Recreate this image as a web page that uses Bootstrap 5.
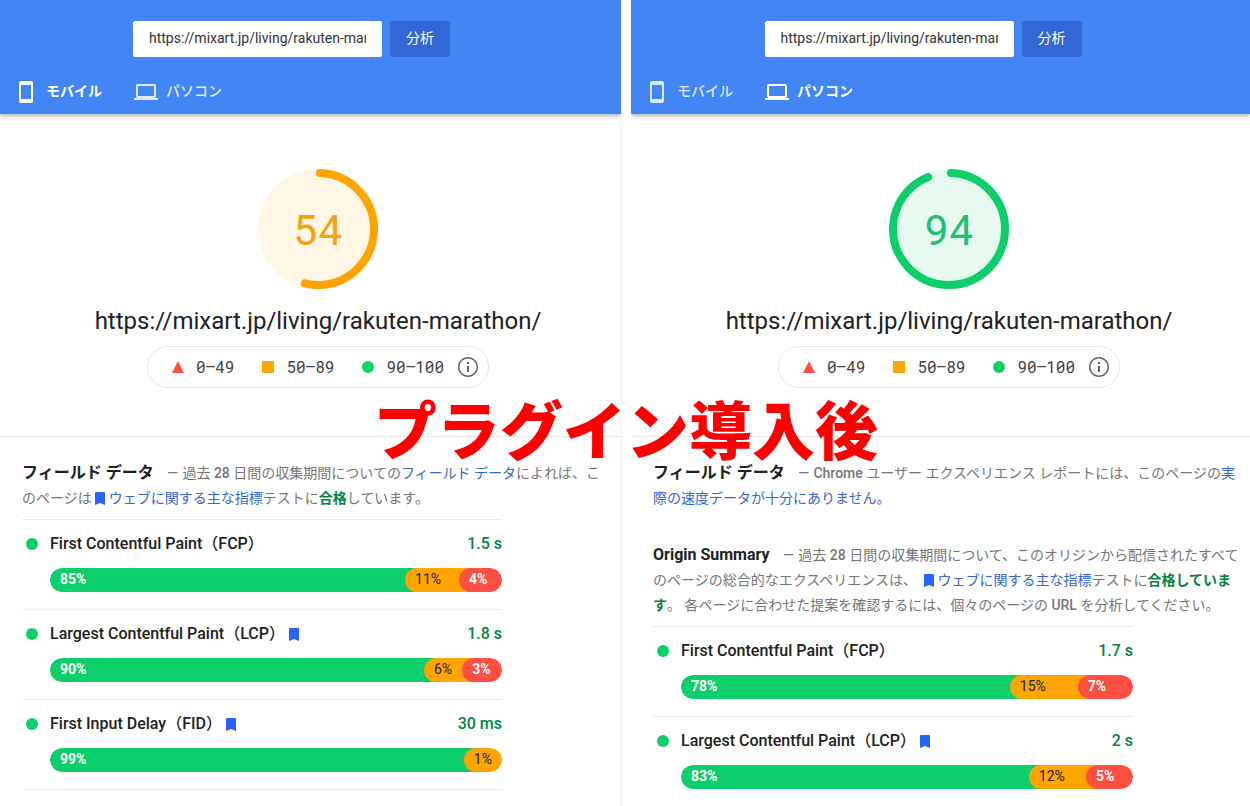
<!DOCTYPE html>
<html lang="ja">
<head>
<meta charset="utf-8">
<meta name="viewport" content="width=device-width, initial-scale=1">
<title>PageSpeed Insights</title>
<link href="https://cdn.jsdelivr.net/npm/bootstrap@5.3.0/dist/css/bootstrap.min.css" rel="stylesheet">
<style>
body { font-family: Roboto, "Noto Sans CJK JP", sans-serif; font-size: 14px; color: #212121; background: #fff; overflow-x: hidden; }
.compare { display: grid; grid-template-columns: 621fr 10px 619fr; }
.divider { border-left: 1px solid #f3f3f3; }
.report { min-width: 0; }
.topbar { background: #4285f4; height: 114px; padding-top: 21px; box-shadow: 0 2px 4px rgba(0,0,0,.3); clip-path: inset(0 0 -8px 0); }
.topbar form { padding-right: 38px; }
.desktop .topbar form { padding-right: 35px; }
.url-box { width: 249px; height: 36px; padding: 0 16px 2px; border: 0; border-radius: 2px; font-size: 14px; color: #333; }
.go { width: 60px; height: 36px; padding: 0 0 2px; border-radius: 2px; font-size: 14px; --bs-btn-bg: #3367d6; --bs-btn-color: #fff; --bs-btn-hover-bg: #2a56c6; --bs-btn-hover-color: #fff; --bs-btn-border-width: 0; }
.tabs { padding: 23px 0 0 18px; gap: 32px; }
.tabs a { color: #fff; opacity: .82; height: 24px; line-height: 20px; text-decoration: none; font-weight: 500; }
.tabs a.active { opacity: 1; font-weight: 700; }
.tabs a + a { gap: 8px; }
.tabs a:first-child { gap: 12px; }
.tabs span { padding-bottom: 2px; }
.hero { padding: 55px 0 48px 15px; border-bottom: 1px solid #e6e6e6; }
.desktop .hero { padding-left: 17px; }
.gauge { width: 120px; height: 120px; }
.gauge text { font-family: "Roboto Mono", Roboto, sans-serif; font-size: 42px; text-anchor: middle; }
.page-url { font-size: 24px; line-height: 32px; margin: 16px 0 9px; font-weight: 400; }
.scale { width: 342px; max-width: 100%; height: 42px; padding-left: 24px; border: 1px solid #e6e6e6; border-radius: 21px; font-family: "Roboto Mono", "Liberation Mono", monospace; font-size: 16px; color: #424242; }
.scale span + span { margin-left: 28px; }
.scale span + svg { margin-left: 12px; }
.field { padding: 24px 6px 0 22px; }
.mobile .field { padding-right: 12px; }
.summary { line-height: 25px; color: #757575; }
.summary + .metrics { margin-top: 8px; }
.summary + .summary { margin-top: 32px; }
.summary h2 { font-size: 16px; line-height: 24px; font-weight: 700; color: #212121; display: inline; margin: 0 10px 0 0; }
.summary a { color: #3367d6; text-decoration: none; }
.summary b { color: #018642; }
.summary span { font-weight: 500; }
.summary .dash { margin-right: 1px; }
.flag { width: 10px; height: 13px; fill: #2962ff; }
.summary .flag { margin: 0 4px 0 3px; vertical-align: -2px; }
.metrics { max-width: 480px; border-bottom: 1px solid #ebebeb; }
.metric { border-top: 1px solid #ebebeb; height: 90px; padding-top: 12px; font-size: 16px; }
.metric-head { height: 24px; font-weight: 500; line-height: 24px; }
.metric-head h3 { font-size: 16px; line-height: 24px; font-weight: 500; margin: 0; }
.metric-head .flag { margin-left: 4px; }
.dot { width: 12px; height: 12px; border-radius: 50%; background: #0cce6b; margin: 0 12px 0 4px; }
.value { color: #018642; }
.dist { height: 24px; margin: 12px 0 0 28px; border-radius: 12px; overflow: hidden; }
.seg { border-radius: 12px; padding-left: 10px; font-size: 14px; line-height: 23px; font-weight: 700; color: #fff; flex-shrink: 0; }
.seg + .seg { margin-left: -12px; }
.seg:last-child { flex: 1 0 0; }
.good { background: #0cce6b; }
.good.seg { border-radius: 12px 0 0 12px; }
.medium { background: #ffa400; color: #212121; font-weight: 400; }
.medium:not(:last-child) { border-radius: 12px 0 0 12px; }
.poor { background: #ff4e42; }
.caption { left: 0; right: 0; top: 382px; padding-left: 2px; font-family: "Noto Sans CJK JP", sans-serif; font-weight: 900; font-size: 63px; line-height: 90px; color: #f00; pointer-events: none; }
</style>
</head>
<body>
<svg class="d-none" aria-hidden="true">
  <symbol id="bookmark" viewBox="0 0 10 13"><path d="M1 0h8a1 1 0 0 1 1 1v12L5 11 0 13V1a1 1 0 0 1 1-1z"/></symbol>
  <symbol id="phone" viewBox="0 0 16 24"><path fill-rule="evenodd" d="M3 1h10a2 2 0 0 1 2 2v18a2 2 0 0 1-2 2H3a2 2 0 0 1-2-2V3a2 2 0 0 1 2-2zm0 4v14h10V5z"/></symbol>
  <symbol id="laptop" viewBox="0 0 24 24"><path fill-rule="evenodd" d="M4 4h16a2 2 0 0 1 2 2v10a2 2 0 0 1-2 2h4v2H0v-2h4a2 2 0 0 1-2-2V6a2 2 0 0 1 2-2zm0 2v10h16V6z"/></symbol>
  <symbol id="info" viewBox="0 0 24 24"><path d="M11 17h2v-6h-2v6zm1-15C6.480 2 2 6.480 2 12s4.480 10 10 10 10-4.480 10-10S17.520 2 12 2zm0 18.500c-4.700 0-8.500-3.800-8.500-8.500S7.300 3.500 12 3.500s8.500 3.800 8.500 8.500-3.800 8.500-8.500 8.500zM11 9h2V7h-2v2z"/></symbol>
</svg>
<main class="compare position-relative">
  <section class="report mobile">
    <header class="topbar">
      <form class="d-flex justify-content-center gap-2">
        <input class="url-box" type="text" aria-label="URL" value="https://mixart.jp/living/rakuten-marathon/">
        <button class="btn go" type="button">分析</button>
      </form>
      <nav class="tabs d-flex">
        <a class="active d-flex align-items-center" href="#"><svg width="16" height="24" fill="#fff"><use href="#phone"/></svg><span>モバイル</span></a>
        <a class="d-flex align-items-center" href="#"><svg width="24" height="24" fill="#fff"><use href="#laptop"/></svg><span>パソコン</span></a>
      </nav>
    </header>
    <div class="hero d-flex flex-column align-items-center">
      <svg class="gauge" viewBox="0 0 120 120">
        <circle cx="60" cy="60" r="60" fill="#fff6e5"/>
        <circle cx="60" cy="60" r="56" fill="none" stroke="#ffa400" stroke-width="8" stroke-linecap="round" stroke-dasharray="187 352" transform="rotate(-88 60 60)"/>
        <text x="60" y="76" fill="#f5a30a">54</text>
      </svg>
      <h1 class="page-url">https://mixart.jp/living/rakuten-marathon/</h1>
      <div class="scale d-flex align-items-center">
        <span class="d-flex align-items-center"><svg class="me-2" width="16" height="12"><path d="M6 0l6 12H0z" fill="#ff4e42"/></svg>0–49</span>
        <span class="d-flex align-items-center"><svg class="me-2" width="16" height="12"><path d="M0 0h12v12H0z" fill="#ffa400"/></svg>50–89</span>
        <span class="d-flex align-items-center"><svg class="me-2" width="16" height="12"><circle cx="6" cy="6" r="6" fill="#0cce6b"/></svg>90–100</span>
        <svg width="24" height="24" fill="#616161"><use href="#info"/></svg>
      </div>
    </div>
    <div class="field">
      <div class="summary"><h2>フィールド データ</h2> <span class="dash">—</span> 過去 <span>28</span> 日間の収集期間についての<a href="#">フィールド データ</a>によれば、このページは<svg class="flag"><use href="#bookmark"/></svg><a href="#">ウェブに関する主な指標</a>テストに<b>合格</b>しています。</div>
      <div class="metrics">
        <div class="metric">
          <div class="metric-head d-flex align-items-center"><i class="dot"></i><h3>First Contentful Paint（FCP）</h3><span class="value ms-auto">1.5 s</span></div>
          <div class="dist d-flex"><div class="seg good" style="width:81.2%">85%</div><div class="seg medium" style="width:14.6%">11%</div><div class="seg poor">4%</div></div>
        </div>
        <div class="metric">
          <div class="metric-head d-flex align-items-center"><i class="dot"></i><h3>Largest Contentful Paint（LCP）</h3><svg class="flag"><use href="#bookmark"/></svg><span class="value ms-auto">1.8 s</span></div>
          <div class="dist d-flex"><div class="seg good" style="width:85.4%">90%</div><div class="seg medium" style="width:11.1%">6%</div><div class="seg poor">3%</div></div>
        </div>
        <div class="metric">
          <div class="metric-head d-flex align-items-center"><i class="dot"></i><h3>First Input Delay（FID）</h3><svg class="flag"><use href="#bookmark"/></svg><span class="value ms-auto">30 ms</span></div>
          <div class="dist d-flex"><div class="seg good" style="width:94.2%">99%</div><div class="seg medium">1%</div></div>
        </div>
      </div>
    </div>
  </section>
  <div class="divider"></div>
  <section class="report desktop">
    <header class="topbar">
      <form class="d-flex justify-content-center gap-2">
        <input class="url-box" type="text" aria-label="URL" value="https://mixart.jp/living/rakuten-marathon/">
        <button class="btn go" type="button">分析</button>
      </form>
      <nav class="tabs d-flex">
        <a class="d-flex align-items-center" href="#"><svg width="16" height="24" fill="#fff"><use href="#phone"/></svg><span>モバイル</span></a>
        <a class="active d-flex align-items-center" href="#"><svg width="24" height="24" fill="#fff"><use href="#laptop"/></svg><span>パソコン</span></a>
      </nav>
    </header>
    <div class="hero d-flex flex-column align-items-center">
      <svg class="gauge" viewBox="0 0 120 120">
        <circle cx="60" cy="60" r="60" fill="#e6faf0"/>
        <circle cx="60" cy="60" r="56" fill="none" stroke="#0cce6b" stroke-width="8" stroke-linecap="round" stroke-dasharray="328 352" transform="rotate(-88 60 60)"/>
        <text x="60" y="76" fill="#1fc171">94</text>
      </svg>
      <h1 class="page-url">https://mixart.jp/living/rakuten-marathon/</h1>
      <div class="scale d-flex align-items-center">
        <span class="d-flex align-items-center"><svg class="me-2" width="16" height="12"><path d="M6 0l6 12H0z" fill="#ff4e42"/></svg>0–49</span>
        <span class="d-flex align-items-center"><svg class="me-2" width="16" height="12"><path d="M0 0h12v12H0z" fill="#ffa400"/></svg>50–89</span>
        <span class="d-flex align-items-center"><svg class="me-2" width="16" height="12"><circle cx="6" cy="6" r="6" fill="#0cce6b"/></svg>90–100</span>
        <svg width="24" height="24" fill="#616161"><use href="#info"/></svg>
      </div>
    </div>
    <div class="field">
      <div class="summary"><h2>フィールド データ</h2> <span class="dash">—</span> <span>Chrome</span> ユーザー エクスペリエンス レポートには、このページの<a href="#">実際の速度データが十分にありません。</a></div>
      <div class="summary"><h2>Origin Summary</h2> <span class="dash">—</span> 過去 <span>28</span> 日間の収集期間について、このオリジンから配信されたすべてのページの総合的なエクスペリエンスは、 <svg class="flag"><use href="#bookmark"/></svg><a href="#">ウェブに関する主な指標</a>テストに<b>合格しています</b>。 各ページに合わせた提案を確認するには、個々のページの <span>URL</span> を分析してください。</div>
      <div class="metrics">
        <div class="metric">
          <div class="metric-head d-flex align-items-center"><i class="dot"></i><h3>First Contentful Paint（FCP）</h3><span class="value ms-auto">1.7 s</span></div>
          <div class="dist d-flex"><div class="seg good" style="width:75.4%">78%</div><div class="seg medium" style="width:17.7%">15%</div><div class="seg poor">7%</div></div>
        </div>
        <div class="metric">
          <div class="metric-head d-flex align-items-center"><i class="dot"></i><h3>Largest Contentful Paint（LCP）</h3><svg class="flag"><use href="#bookmark"/></svg><span class="value ms-auto">2 s</span></div>
          <div class="dist d-flex"><div class="seg good" style="width:79.6%">83%</div><div class="seg medium" style="width:15.3%">12%</div><div class="seg poor">5%</div></div>
        </div>
      </div>
    </div>
  </section>
  <div class="caption position-absolute text-center">プラグイン導入後</div>
</main>
<script src="https://cdn.jsdelivr.net/npm/bootstrap@5.3.0/dist/js/bootstrap.bundle.min.js"></script>
</body>
</html>
